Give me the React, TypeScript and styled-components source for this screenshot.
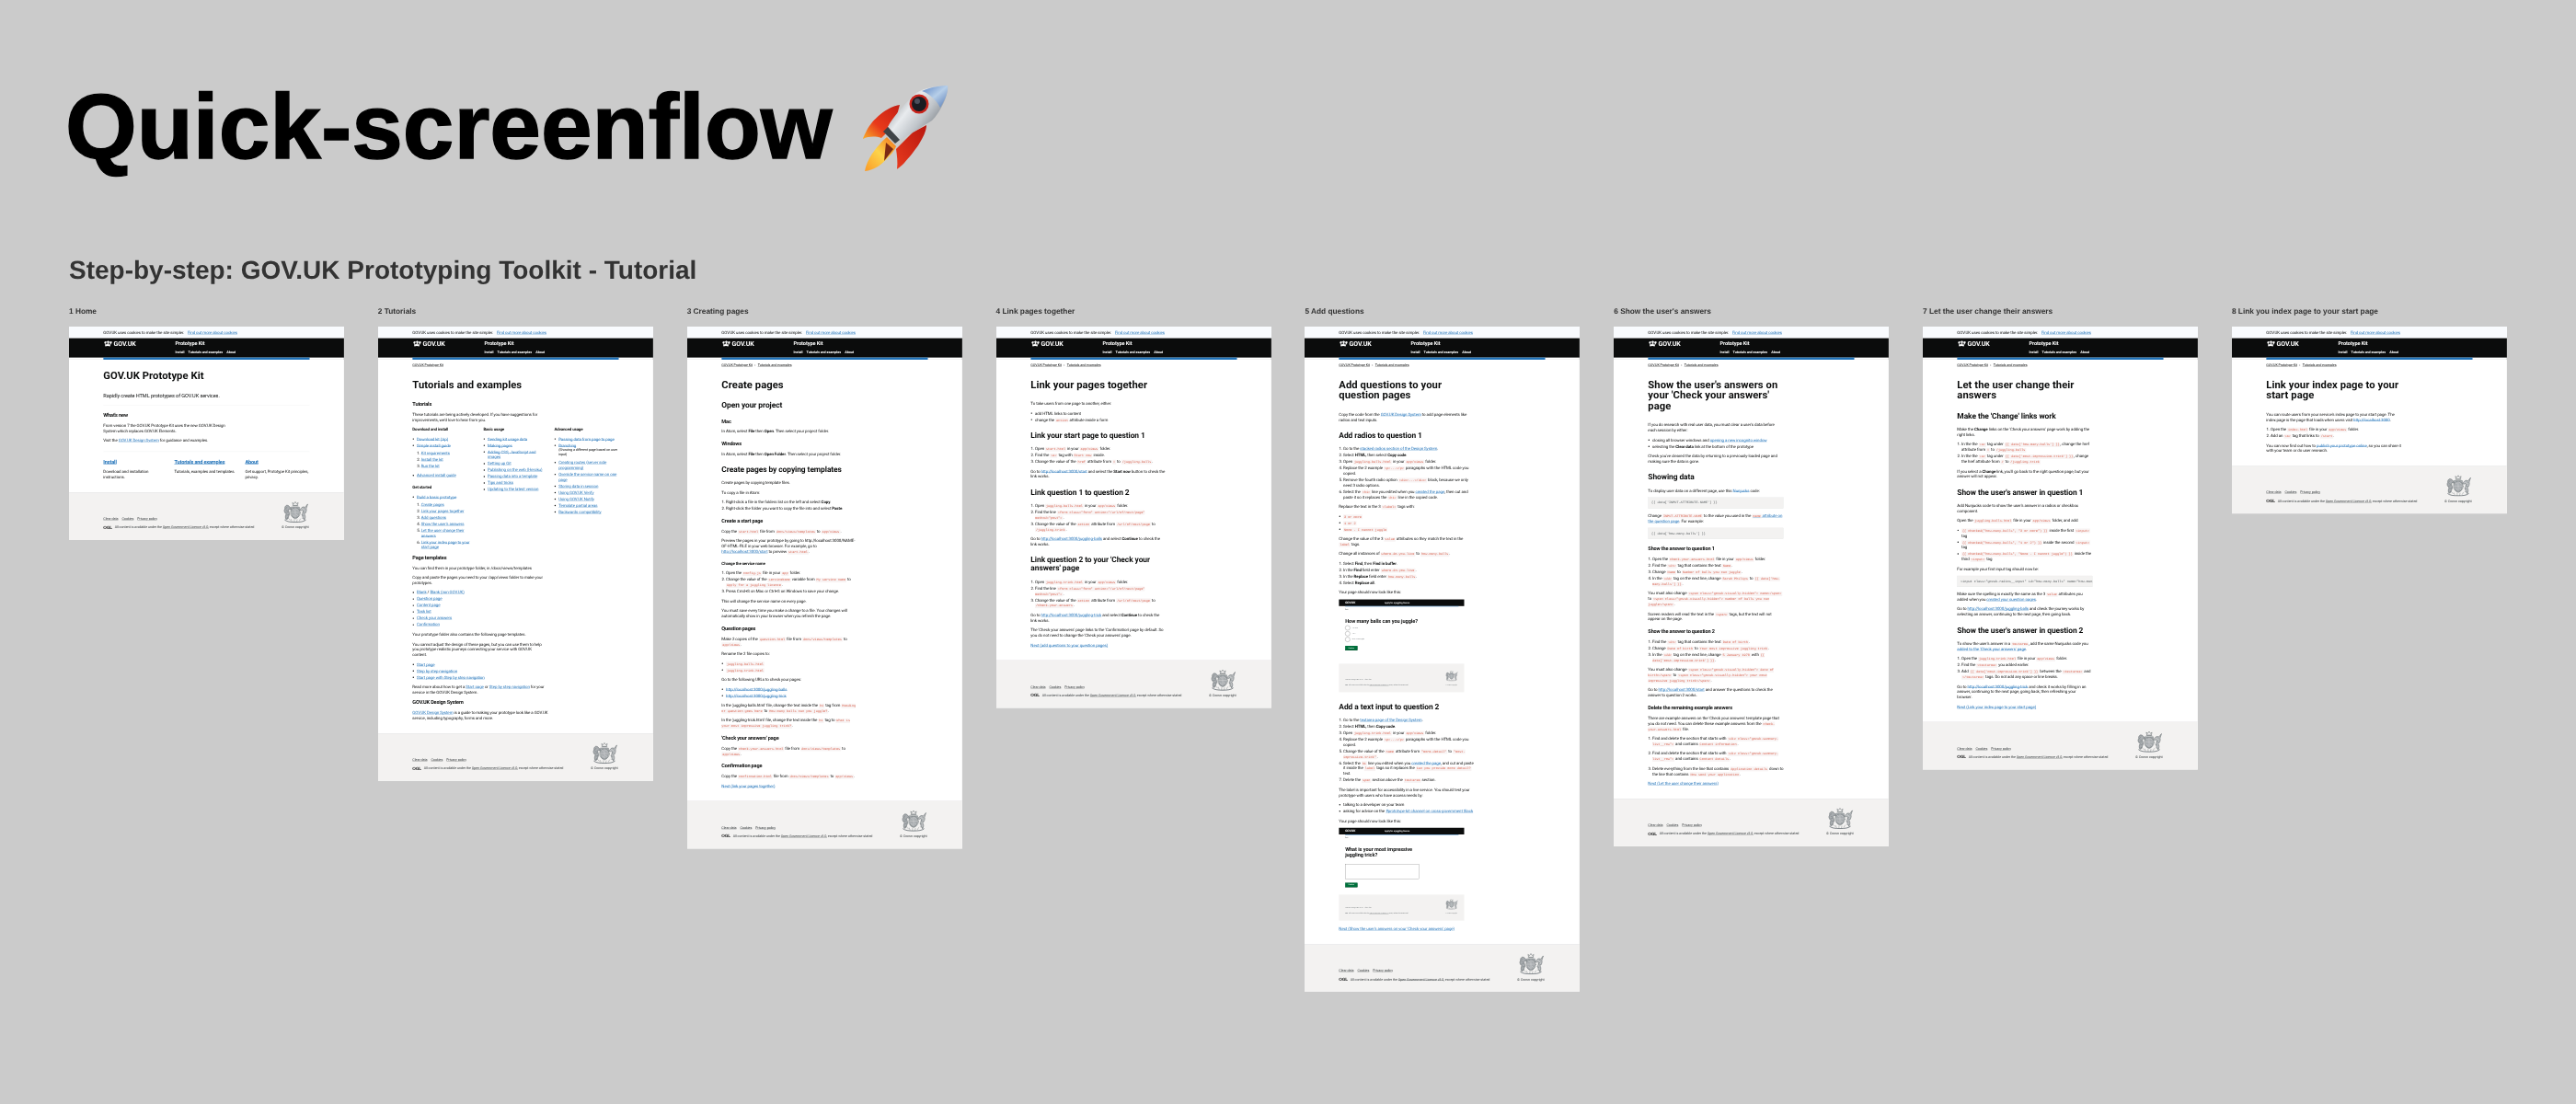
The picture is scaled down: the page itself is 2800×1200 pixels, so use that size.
import React from 'react';
import styled, { createGlobalStyle } from 'styled-components';

const GlobalStyle = createGlobalStyle`
  html, body { margin: 0; padding: 0; background: #cbcbcb; }
  body { width: 2800px; height: 1200px; overflow: hidden; }
`;

const Shell = styled.div`
  padding: 88px 0 0 75px;
  font-family: "Liberation Sans", Arial, sans-serif;
  text-rendering: geometricPrecision;
`;
const TitleRow = styled.div`display: flex; align-items: flex-start; margin-left: -4px;`;
const Title = styled.h1`
  margin: 0; font-size: 100px; line-height: 100px; font-weight: 700; color: #000; filter: blur(0.4px);
  -webkit-text-stroke: 1.4px #000;
`;
const RocketSvg = styled.svg`width: 100px; height: 100px; margin: 2px 0 0 29px; flex: none; filter: blur(0.3px);`;
const Subtitle = styled.h2`
  margin: 90px 0 25px; font-size: 28px; line-height: 28px; font-weight: 700; color: #333; filter: blur(0.4px);
`;
const Flow = styled.div`display: flex; gap: 36.98px; align-items: flex-start;`;
const Column = styled.div`width: 298.88px; flex: none;`;
const Label = styled.div`
  font-size: 8.3px; line-height: 10px; font-weight: 700; color: #333; margin-bottom: 12px; filter: blur(0.25px);
`;
const Frame = styled.div<{ $h: number }>`height: ${p => p.$h}px; filter: blur(0.5px);`;
const Page = styled.div`
  transform: scale(0.2335);
  transform-origin: 0 0;
  width: 1280px;
  background: #fff;
  font-family: Roboto, "Liberation Sans", sans-serif;
  text-rendering: geometricPrecision;
  font-size: 19px;
  line-height: 25px;
  letter-spacing: -0.018em;
  color: #0b0c0c;
`;
const Cookie = styled.div`height: 54px; background: #f9fbfe; display: flex; align-items: center; padding-left: 160px; font-size: 19px; white-space: pre;`;
const CookieLink = styled.a`color: #1d70b8; text-decoration: underline; margin-left: 16px;`;
const Header = styled.header`background: #0b0c0c; color: #fff; height: 90px; border-bottom: 10px solid #fff;`;
const HeaderInner = styled.div`
  width: 960px; height: 100px; margin: 0 auto; border-bottom: 10px solid #1d70b8; box-sizing: border-box; display: grid; grid-template-columns: 335px 1fr;
`;
const Logo = styled.div`display: flex; align-items: center; gap: 8px; font-size: 30px; line-height: 30px; font-weight: 700; height: 30px; margin-top: 11px; letter-spacing: -0.01em;`;
const CrownSvg = styled.svg`width: 40px; height: 32px; fill: #fff;`;
const ServiceBlock = styled.div`padding-top: 13px;`;
const ServiceName = styled.div`font-size: 24px; line-height: 25px; font-weight: 700; letter-spacing: -0.015em;`;
const Nav = styled.div`display: flex; gap: 18px; font-size: 16px; line-height: 25px; font-weight: 700; margin-top: 15px; letter-spacing: -0.02em;`;
const Container = styled.div`width: 960px; margin: 0 auto;`;
const Main = styled.main<{ $top?: number; $bottom?: number }>`
  padding-top: ${p => p.$top ?? 46}px; padding-bottom: ${p => p.$bottom ?? 38}px;
`;
const Crumbs = styled.div`display: flex; gap: 10px; padding-top: 15px; font-size: 16px; line-height: 20px; margin-bottom: 10px;`;
const CrumbLink = styled.a`color: #0b0c0c; text-decoration: underline;`;
const Narrow = styled.div`width: 630px;`;
const H1 = styled.h1`margin: 0 0 50px; font-size: 48px; line-height: 50px; font-weight: 700; letter-spacing: 0.006em;`;
const H2 = styled.h2`margin: 0 0 30px; padding-top: 20px; font-size: 36px; line-height: 40px; font-weight: 700; letter-spacing: -0.008em;`;
const FirstH2 = styled(H2)`padding-top: 0;`;
const H3 = styled.h3`margin: 0 0 20px; padding-top: 10px; font-size: 24px; line-height: 30px; font-weight: 700; letter-spacing: -0.03em;`;
const PlainH3 = styled(H3)`padding-top: 0;`;
const H4 = styled.h4`margin: 0 0 20px; padding-top: 10px; font-size: 19px; line-height: 25px; font-weight: 700; letter-spacing: -0.03em;`;
const ColHead = styled(H4)`padding-top: 0;`;
const Lead = styled.p`margin: 0 0 30px; font-size: 24px; line-height: 30px;`;
const P = styled.p`margin: 0 0 20px;`;
const Small = styled.div`font-size: 16px; line-height: 20px; margin-bottom: 15px; color: #0b0c0c;`;
const A = styled.a`color: #1d70b8; text-decoration: underline;`;
const CardLink = styled.a`display: block; color: #1d70b8; text-decoration: underline; font-size: 24px; line-height: 30px; font-weight: 700; margin-bottom: 20px; letter-spacing: -0.03em;`;
const Code = styled.code`
  font-family: "Liberation Mono", monospace; font-size: 15px; line-height: 1; color: #d9604c; background: #f8f3f3; padding: 2px 4px; letter-spacing: 0;
`;
const Pre = styled.pre`
  margin: 0 0 20px; background: #f3f2f1; border: 1px solid #e2e3e4; padding: 15px; font-family: "Liberation Mono", monospace;
  font-size: 15px; line-height: 20px; overflow: hidden; color: #4d5356; letter-spacing: 0;
`;
const Ol = styled.ol<{ $mb?: number }>`margin: 0 0 ${p => p.$mb ?? 20}px; padding: 0 0 0 20px;`;
const Ul = styled.ul<{ $mb?: number }>`margin: 0 0 ${p => p.$mb ?? 20}px; padding: 0 0 0 20px; list-style: disc;`;
const SubOl = styled(Ol)`margin: 10px 0 20px; padding-left: 20px;`;
const Li = styled.li`margin-bottom: 5px;`;
const SpacedLi = styled(Li)`margin-bottom: 20px;`;
const Hr = styled.hr`border: 0; border-top: 1px solid #e3e5e6; margin: 0 0 31px;`;
const WideHr = styled(Hr)`border-top: 2px solid #eeeff0; margin: 39px 0 30px;`;
const Three = styled.div`display: grid; grid-template-columns: 300px 300px 300px; gap: 30px;`;
const Footer = styled.footer`background: #f3f2f1; border-top: 1px solid #d8d9da; height: 222px; box-sizing: border-box; padding-top: 40px;`;
const FooterInner = styled.div`width: 960px; margin: 0 auto; display: flex; justify-content: space-between; align-items: flex-end;`;
const Meta = styled.div`font-size: 16px; line-height: 20px; color: #383d3f;`;
const MetaLinks = styled.div`display: flex; gap: 17px; margin-bottom: 20px;`;
const MetaLink = styled.a`color: #383d3f; text-decoration: underline;`;
const OglRow = styled.div`display: flex; align-items: center; gap: 12px; font-size: 16px; white-space: nowrap; letter-spacing: -0.02em;`;
const Ogl = styled.span`font-size: 20px; font-weight: 900; letter-spacing: -0.04em; color: #0b0c0c; font-family: "Liberation Sans", sans-serif;`;
const CrestBlock = styled.div`display: flex; flex-direction: column; align-items: center; font-size: 16px; line-height: 20px; color: #383d3f; width: 134px;`;
const CrestSvg = styled.svg<{ $w: number }>`width: ${p => p.$w}px; height: auto; margin-bottom: 11px; display: block;`;

const Mini = styled.div`width: 583px; margin-bottom: 26px;`;
const MiniHeader = styled.div`height: 31px; background: #0b0c0c; color: #fff; display: flex; align-items: center; padding-left: 29px; font-weight: 700; letter-spacing: 0;`;
const MiniLogo = styled.span`font-size: 14px; width: 184px; letter-spacing: -0.02em;`;
const MiniService = styled.span`font-size: 9.5px;`;
const MiniBar = styled.div`margin: 0 26px 0 29px; height: 3px; background: #1d70b8;`;
const MiniBody = styled.div<{ $h: number }>`height: ${p => p.$h}px; padding: 7px 29px 0; box-sizing: border-box; background: #fff;`;
const MiniBack = styled.div`font-size: 7px; line-height: 10px; margin-bottom: 34px; color: #383d3f;`;
const MiniHeading = styled.div`font-size: 24px; line-height: 28px; font-weight: 700; width: 400px; letter-spacing: -0.01em; margin-bottom: 6px;`;
const MiniRadio = styled.div`display: flex; align-items: center; gap: 10px; height: 27px; font-size: 6.5px; color: #5a6064;`;
const RadioDot = styled.span`width: 21px; height: 21px; border: 1px solid #333; border-radius: 50%; flex: none; background: #fff;`;
const MiniButton = styled.div`width: 57px; height: 20px; background: #00703c; color: #fff; font-size: 7.5px; line-height: 20px; text-align: center; margin-top: 16px; box-shadow: 0 1px 0 #002d18;`;
const MiniInput = styled.div`width: 344px; height: 70px; border: 1.5px solid #555; box-sizing: border-box; margin: 28px 0 17px;`;
const MiniFooter = styled.div<{ $h: number }>`height: ${p => p.$h}px; background: #f3f2f1; padding: 0 29px; box-sizing: border-box; display: flex; justify-content: space-between; align-items: flex-end; font-size: 6.5px; line-height: 10px; color: #5a6064; letter-spacing: 0;`;
const MiniMeta = styled.div`padding-bottom: 30px;`;
const MiniMetaTop = styled.div`margin-bottom: 14px; word-spacing: 1px;`;
const MiniCrest = styled.div`display: flex; flex-direction: column; align-items: center; padding: 0 0 30px;`;

const Crown = () => (
  <CrownSvg viewBox="0 0 40 32">
    <path d="M3 12l4 2-1 3 3 1 1-4 3 1-1-5 3 1 1-3-3 0 1-3-3 1-1-3-1 3-3-1 1 3-3 0 1 3 2-1zM20 3l-3 1 1 3-3 0 1 3 3-1-1 6 4 2 4-2-1-6 3 1 1-3-3 0 1-3-3-1-1-2zM33 4l-1 3-3-1 1 3-3 0 1 3 3-1-1 5 3-1 1 4 3-1-1-3 4-2-1-3 2 1 1-3-3 0 1-3-3 1zM7 20c4-2 8-3 13-3s9 1 13 3l-2 8c-3-1-7-2-11-2s-8 1-11 2z" />
  </CrownSvg>
);

const Crest = ({ w = 123 }: { w?: number }) => (
  <CrestSvg $w={w} viewBox="0 0 130 108">
    <g fill="none" stroke="#626a6e" strokeWidth="1.6" strokeLinecap="round" strokeLinejoin="round">
      <path d="M54 20l-3-12 7 6 7-10 7 10 7-6-3 12zM52 24h26" strokeWidth="2.5" />
      <path d="M20 92C14 84 16 72 20 64 10 56 8 46 14 38c-2-8 2-14 9-17 8 0 13 4 14 10 6 1 9 5 7 10-4 1-7 0-9-2-3 4-4 8-2 12 4 8 3 18-1 25l-7 14" strokeWidth="2.5" fill="#a9adb0" />
      <path d="M24 30l-6 8M20 44l8 4M18 56l10-2M24 70l10-4M32 82l-10 4" />
      <path d="M110 92c6-8 5-20 0-28 8-6 12-18 9-27l7-22-13 16c-8-4-16-2-19 5-5 2-8 6-5 10 5 1 8 0 11-3 3 4 4 9 2 13-4 8-3 18 1 25l7 13" strokeWidth="2.5" fill="#c0c3c5" />
      <path d="M106 34l8 6M110 48l-8 4M114 58l-10-2M106 72l-10-4M98 84l10 3" />
      <path d="M45 30h40v30c0 16-9 24-20 28-11-4-20-12-20-28z" fill="#a9adb0" strokeWidth="2" />
      <path d="M65 30v58M45 56h40M50 38l10 8M70 38l10 8M50 66l10 8M70 66l10 8" stroke="#e4e5e6" />
      <circle cx="65" cy="58" r="25" strokeWidth="1.6" />
      <path d="M14 94c10 8 26 10 51 10s41-2 51-10" strokeWidth="3.5" />
      <path d="M30 84l10 10M44 90l4 10M60 92v10M74 92l-2 10M90 88l-6 10" />
    </g>
  </CrestSvg>
);

const Rocket = () => (
  <RocketSvg viewBox="0 0 100 100">
    <defs>
      <linearGradient id="rkBody" x1="0.1" y1="0.15" x2="0.95" y2="0.75">
        <stop offset="0" stopColor="#8a8f94" />
        <stop offset="0.35" stopColor="#e8ebee" />
        <stop offset="0.62" stopColor="#c0c5ca" />
        <stop offset="1" stopColor="#6c7278" />
      </linearGradient>
      <linearGradient id="rkNose" x1="0" y1="0" x2="1" y2="1">
        <stop offset="0" stopColor="#5a83c4" />
        <stop offset="0.5" stopColor="#b7cfe9" />
        <stop offset="1" stopColor="#5277b3" />
      </linearGradient>
      <linearGradient id="rkFin" x1="0" y1="1" x2="1" y2="0">
        <stop offset="0" stopColor="#f9b02a" />
        <stop offset="0.4" stopColor="#e8391a" />
        <stop offset="1" stopColor="#c31f14" />
      </linearGradient>
      <linearGradient id="rkFin2" x1="0" y1="1" x2="1" y2="0">
        <stop offset="0" stopColor="#e83a1e" />
        <stop offset="1" stopColor="#b8170f" />
      </linearGradient>
      <linearGradient id="rkFlame" x1="1" y1="0" x2="0" y2="1">
        <stop offset="0" stopColor="#f36f18" />
        <stop offset="0.5" stopColor="#fcd44c" />
        <stop offset="1" stopColor="#fb9a26" />
      </linearGradient>
    </defs>
    <path d="M44 24C30 26 14 40 8 52c-2 4-4 8-4 9 6-3 14-3 20-1l14-14z" fill="url(#rkFin)" />
    <path d="M73 46c0 12-14 30-24 41-4 4-7 6-8 7 1-8 0-15-1-22l18-18z" fill="url(#rkFin2)" />
    <path d="M30 59l10 10c-2 6-10 14-17 20-5 4-13 7-17 7 1-6 4-13 8-19 5-7 11-14 16-18z" fill="url(#rkFlame)" />
    <path d="M29 65L37 72 27 85z" fill="#7b2a14" />
    <path d="M96 3C85 3 65 6 57 15 48 25 36 38 31 48L44 62C54 57 69 47 79 41 88 32 97 14 96 3Z" fill="url(#rkBody)" />
    <path d="M96 3C88 3 76 5 68 9 75 11 84 19 88 27 93 19 97 10 96 3Z" fill="url(#rkNose)" />
    <path d="M31 48L44 62 39 66 26 53Z" fill="#3f4347" />
    <circle cx="65" cy="23" r="10.5" fill="#c9241c" />
    <circle cx="65" cy="23" r="8" fill="#1a1c22" />
    <circle cx="63" cy="20" r="3" fill="#4a4f5c" />
  </RocketSvg>
);

const SiteFooter = () => (
  <Footer>
    <FooterInner>
      <Meta>
        <MetaLinks>
          <MetaLink>Clear data</MetaLink>
          <MetaLink>Cookies</MetaLink>
          <MetaLink>Privacy policy</MetaLink>
        </MetaLinks>
        <OglRow>
          <Ogl>OGL</Ogl>
          <span>All content is available under the <MetaLink>Open Government Licence v3.0</MetaLink>, except where otherwise stated</span>
        </OglRow>
      </Meta>
      <CrestBlock>
        <Crest />
        <span>© Crown copyright</span>
      </CrestBlock>
    </FooterInner>
  </Footer>
);

const Site = ({ crumbs, top, bottom, children }: { crumbs: number; top?: number; bottom?: number; children: React.ReactNode }) => (
  <Page>
    <Cookie>GOV.UK uses cookies to make the site simpler.<CookieLink>Find out more about cookies</CookieLink></Cookie>
    <Header>
      <HeaderInner>
        <Logo><Crown />GOV.UK</Logo>
        <ServiceBlock>
          <ServiceName>Prototype Kit</ServiceName>
          <Nav><span>Install</span><span>Tutorials and examples</span><span>About</span></Nav>
        </ServiceBlock>
      </HeaderInner>
    </Header>
    <Container>
      {crumbs > 0 && (
        <Crumbs>
          <CrumbLink>GOV.UK Prototype Kit</CrumbLink>
          {crumbs > 1 && <span>›</span>}
          {crumbs > 1 && <CrumbLink>Tutorials and examples</CrumbLink>}
        </Crumbs>
      )}
      <Main $top={top} $bottom={bottom}>{children}</Main>
    </Container>
    <SiteFooter />
  </Page>
);

const Step = ({ n, h, children }: { n: string; h: number; children: React.ReactNode }) => (
  <Column>
    <Label>{n}</Label>
    <Frame $h={h}>{children}</Frame>
  </Column>
);

const OglMini = () => (
  <div><b>OGL</b> &nbsp; All content is available under the <u>Open Government Licence v3.0</u>, except where otherwise stated</div>
);

const MiniRadios = () => (
  <Mini>
    <MiniHeader><MiniLogo>GOV.UK</MiniLogo><MiniService>Apply for a juggling licence</MiniService></MiniHeader>
    <MiniBar />
    <MiniBody $h={265}>
      <MiniBack>Back</MiniBack>
      <MiniHeading>How many balls can you juggle?</MiniHeading>
      <MiniRadio><RadioDot />3 or more</MiniRadio>
      <MiniRadio><RadioDot />1 or 2</MiniRadio>
      <MiniRadio><RadioDot />None - I cannot juggle</MiniRadio>
      <MiniButton>Continue</MiniButton>
    </MiniBody>
    <MiniFooter $h={133}>
      <MiniMeta>
        <MiniMetaTop>GOV.UK Prototype Kit v9.0.0 &nbsp; Clear data</MiniMetaTop>
        <OglMini />
      </MiniMeta>
      <MiniCrest><Crest w={60} /><span>© Crown copyright</span></MiniCrest>
    </MiniFooter>
  </Mini>
);

const MiniText = () => (
  <Mini>
    <MiniHeader><MiniLogo>GOV.UK</MiniLogo><MiniService>Apply for a juggling licence</MiniService></MiniHeader>
    <MiniBar />
    <MiniBody $h={277}>
      <MiniBack>Back</MiniBack>
      <MiniHeading>What is your most impressive juggling trick?</MiniHeading>
      <MiniInput />
      <MiniButton>Continue</MiniButton>
    </MiniBody>
    <MiniFooter $h={121}>
      <MiniMeta>
        <MiniMetaTop>GOV.UK Prototype Kit v9.0.0 &nbsp; Clear data</MiniMetaTop>
        <OglMini />
      </MiniMeta>
      <MiniCrest><Crest w={60} /><span>© Crown copyright</span></MiniCrest>
    </MiniFooter>
  </Mini>
);

const Home = () => (
  <Site crumbs={0} top={51}>
    <H1>GOV.UK Prototype Kit</H1>
    <Lead>Rapidly create HTML prototypes of GOV.UK services.</Lead>
    <Hr />
    <PlainH3>What's new</PlainH3>
    <Narrow>
      <P>From version 7 the GOV.UK Prototype Kit uses the new GOV.UK Design<br />System which replaces GOV.UK Elements.</P>
      <P>Visit the <A>GOV.UK Design System</A> for guidance and examples.</P>
    </Narrow>
    <WideHr />
    <Three>
      <div><CardLink>Install</CardLink><P>Download and installation instructions.</P></div>
      <div><CardLink>Tutorials and examples</CardLink><P>Tutorials, examples and templates.</P></div>
      <div><CardLink>About</CardLink><P>Get support, Prototype Kit principles, privacy.</P></div>
    </Three>
  </Site>
);

const Tutorials = () => (
  <Site crumbs={1}>
    <H1>Tutorials and examples</H1>
    <PlainH3>Tutorials</PlainH3>
    <Narrow><P>These tutorials are being actively developed. If you have suggestions for improvements, we'd love to hear from you.</P></Narrow>
    <Three>
      <div>
        <ColHead>Download and install</ColHead>
        <Ul>
          <Li><A>Download kit (zip)</A></Li>
          <Li><A>Simple install guide</A>
            <SubOl>
              <Li><A>Kit requirements</A></Li>
              <Li><A>Install the kit</A></Li>
              <Li><A>Run the kit</A></Li>
            </SubOl>
          </Li>
          <Li><A>Advanced install guide</A></Li>
        </Ul>
        <H4>Get started</H4>
        <Ul>
          <Li><A>Build a basic prototype</A>
            <SubOl>
              <Li><A>Create pages</A></Li>
              <Li><A>Link your pages together</A></Li>
              <Li><A>Add questions</A></Li>
              <Li><A>Show the user's answers</A></Li>
              <Li><A>Let the user change their answers</A></Li>
              <Li><A>Link your index page to your start page</A></Li>
            </SubOl>
          </Li>
        </Ul>
      </div>
      <div>
        <ColHead>Basic usage</ColHead>
        <Ul>
          <Li><A>Sending kit usage data</A></Li>
          <Li><A>Making pages</A></Li>
          <Li><A>Adding CSS, JavaScript and<br />images</A></Li>
          <Li><A>Setting up Git</A></Li>
          <Li><A>Publishing on the web (Heroku)</A></Li>
          <Li><A>Passing data into a template</A></Li>
          <Li><A>Tips and tricks</A></Li>
          <Li><A>Updating to the latest version</A></Li>
        </Ul>
      </div>
      <div>
        <ColHead>Advanced usage</ColHead>
        <Ul>
          <Li><A>Passing data from page to page</A></Li>
          <Li><A>Branching</A><Small>(Showing a different page based on user input)</Small></Li>
          <Li><A>Creating routes (server side<br />programming)</A></Li>
          <Li><A>Override the service name on one<br />page</A></Li>
          <Li><A>Storing data in session</A></Li>
          <Li><A>Using GOV.UK Verify</A></Li>
          <Li><A>Using GOV.UK Notify</A></Li>
          <Li><A>Template partial areas</A></Li>
          <Li><A>Backwards compatibility</A></Li>
        </Ul>
      </div>
    </Three>
    <Narrow>
      <PlainH3>Page templates</PlainH3>
      <P>You can find them in your prototype folder, in /docs/views/templates</P>
      <P>Copy and paste the pages you need to your /app/views folder to make your prototypes.</P>
      <Ul>
        <Li><A>Blank</A> / <A>Blank (non GOV.UK)</A></Li>
        <Li><A>Question page</A></Li>
        <Li><A>Content page</A></Li>
        <Li><A>Task list</A></Li>
        <Li><A>Check your answers</A></Li>
        <Li><A>Confirmation</A></Li>
      </Ul>
      <P>Your prototype folder also contains the following page templates.</P>
      <P>You cannot adjust the design of these pages, but you can use them to help<br />you prototype realistic journeys connecting your service with GOV.UK<br />content.</P>
      <Ul>
        <Li><A>Start page</A></Li>
        <Li><A>Step by step navigation</A></Li>
        <Li><A>Start page with Step by step navigation</A></Li>
      </Ul>
      <P>Read more about how to get a <A>Start page</A> or <A>Step by step navigation</A> for your service in the GOV.UK Design System.</P>
      <PlainH3>GOV.UK Design System</PlainH3>
      <P><A>GOV.UK Design System</A> is a guide to making your prototype look like a GOV.UK service, including typography, forms and more.</P>
    </Narrow>
  </Site>
);

const Creating = () => (
  <Site crumbs={2}>
    <Narrow>
      <H1>Create pages</H1>
      <FirstH2>Open your project</FirstH2>
      <H3>Mac</H3>
      <P>In Atom, select <b>File</b> then <b>Open</b>. Then select your project folder.</P>
      <H3>Windows</H3>
      <P>In Atom, select <b>File</b> then <b>Open Folder</b>. Then select your project folder.</P>
      <H2>Create pages by copying templates</H2>
      <P>Create pages by copying template files.</P>
      <P>To copy a file in Atom:</P>
      <Ol>
        <Li>Right-click a file in the folders list on the left and select <b>Copy</b>.</Li>
        <Li>Right-click the folder you want to copy the file into and select <b>Paste</b>.</Li>
      </Ol>
      <H3>Create a start page</H3>
      <P>Copy the <Code>start.html</Code> file from <Code>docs/views/templates</Code> to <Code>app/views</Code>.</P>
      <P>Preview the pages in your prototype by going to http://localhost:3000/NAME-OF-HTML-FILE in your web browser. For example, go to <A>http://localhost:3000/start</A> to preview <Code>start.html</Code>.</P>
      <H4>Change the service name</H4>
      <Ol>
        <Li>Open the <Code>config.js</Code> file in your <Code>app</Code> folder.</Li>
        <Li>Change the value of the <Code>serviceName</Code> variable from <Code>My service name</Code> to <Code>Apply for a juggling licence</Code>.</Li>
        <Li>Press Cmd+S on Mac or Ctrl+S on Windows to save your change.</Li>
      </Ol>
      <P>This will change the service name on every page.</P>
      <P>You must save every time you make a change to a file. Your changes will automatically show in your browser when you refresh the page.</P>
      <H3>Question pages</H3>
      <P>Make 2 copies of the <Code>question.html</Code> file from <Code>docs/views/templates</Code> to <Code>app/views</Code>.</P>
      <P>Rename the 2 file copies to:</P>
      <Ul>
        <Li><Code>juggling-balls.html</Code></Li>
        <Li><Code>juggling-trick.html</Code></Li>
      </Ul>
      <P>Go to the following URLs to check your pages:</P>
      <Ul>
        <Li><A>http://localhost:3000/juggling-balls</A></Li>
        <Li><A>http://localhost:3000/juggling-trick</A></Li>
      </Ul>
      <P>In the 'juggling-balls.html' file, change the text inside the <Code>h1</Code> tag from <Code>Heading or question goes here</Code> to <Code>How many balls can you juggle?</Code>.</P>
      <P>In the 'juggling-trick.html' file, change the text inside the <Code>h1</Code> tag to <Code>What is your most impressive juggling trick?</Code>.</P>
      <H3>'Check your answers' page</H3>
      <P>Copy the <Code>check-your-answers.html</Code> file from <Code>docs/views/templates</Code> to <Code>app/views</Code>.</P>
      <H3>Confirmation page</H3>
      <P>Copy the <Code>confirmation.html</Code> file from <Code>docs/views/templates</Code> to <Code>app/views</Code>.</P>
      <P><A>Next (link your pages together)</A></P>
    </Narrow>
  </Site>
);

const Linking = () => (
  <Site crumbs={2}>
    <Narrow>
      <H1>Link your pages together</H1>
      <P>To take users from one page to another, either:</P>
      <Ul>
        <Li>add HTML links to content</Li>
        <Li>change the <Code>action</Code> attribute inside a form</Li>
      </Ul>
      <H2>Link your start page to question 1</H2>
      <Ol>
        <Li>Open <Code>start.html</Code> in your <Code>app/views</Code> folder.</Li>
        <Li>Find the <Code>&lt;a&gt;</Code> tag with <Code>Start now</Code> inside.</Li>
        <Li>Change the value of the <Code>href</Code> attribute from <Code>#</Code> to <Code>/juggling-balls</Code>.</Li>
      </Ol>
      <P>Go to <A>http://localhost:3000/start</A> and select the <b>Start now</b> button to check the link works.</P>
      <H2>Link question 1 to question 2</H2>
      <Ol>
        <Li>Open <Code>juggling-balls.html</Code> in your <Code>app/views</Code> folder.</Li>
        <Li>Find the line <Code>&lt;form class="form" action="/url/of/next/page" method="post"&gt;</Code>.</Li>
        <Li>Change the value of the <Code>action</Code> attribute from <Code>/url/of/next/page</Code> to <Code>/juggling-trick</Code>.</Li>
      </Ol>
      <P>Go to <A>http://localhost:3000/juggling-balls</A> and select <b>Continue</b> to check the link works.</P>
      <H2>Link question 2 to your 'Check your answers' page</H2>
      <Ol>
        <Li>Open <Code>juggling-trick.html</Code> in your <Code>app/views</Code> folder.</Li>
        <Li>Find the line <Code>&lt;form class="form" action="/url/of/next/page" method="post"&gt;</Code>.</Li>
        <Li>Change the value of the <Code>action</Code> attribute from <Code>/url/of/next/page</Code> to <Code>/check-your-answers</Code>.</Li>
      </Ol>
      <P>Go to <A>http://localhost:3000/juggling-trick</A> and select <b>Continue</b> to check the link works.</P>
      <P>The 'Check your answers' page links to the 'Confirmation' page by default. So you do not need to change the 'Check your answers' page.</P>
      <P><A>Next (add questions to your question pages)</A></P>
    </Narrow>
  </Site>
);

const Questions = () => (
  <Site crumbs={2}>
    <Narrow>
      <H1>Add questions to your question pages</H1>
      <P>Copy the code from the <A>GOV.UK Design System</A> to add page elements like radios and text inputs.</P>
      <H2>Add radios to question 1</H2>
      <Ol>
        <Li>Go to the <A>stacked radios section of the Design System</A>.</Li>
        <Li>Select <b>HTML</b>, then select <b>Copy code</b>.</Li>
        <Li>Open <Code>juggling-balls.html</Code> in your <Code>app/views</Code> folder.</Li>
        <Li>Replace the 2 example <Code>&lt;p&gt;...&lt;/p&gt;</Code> paragraphs with the HTML code you copied.</Li>
        <Li>Remove the fourth radio option <Code>&lt;div&gt;...&lt;/div&gt;</Code> block, because we only need 3 radio options.</Li>
        <Li>Select the <Code>&lt;h1&gt;</Code> line you edited when you <A>created the page</A>, then cut and paste it so it replaces the <Code>&lt;h1&gt;</Code> line in the copied code.</Li>
      </Ol>
      <P>Replace the text in the 3 <Code>&lt;label&gt;</Code> tags with:</P>
      <Ul>
        <Li><Code>3 or more</Code></Li>
        <Li><Code>1 or 2</Code></Li>
        <Li><Code>None - I cannot juggle</Code></Li>
      </Ul>
      <P>Change the value of the 3 <Code>value</Code> attributes so they match the text in the <Code>label</Code> tags.</P>
      <P>Change all instances of <Code>where-do-you-live</Code> to <Code>how-many-balls</Code>.</P>
      <Ol>
        <Li>Select <b>Find</b>, then <b>Find in buffer</b>.</Li>
        <Li>In the <b>Find</b> field enter <Code>where-do-you-live</Code>.</Li>
        <Li>In the <b>Replace</b> field enter <Code>how-many-balls</Code>.</Li>
        <Li>Select <b>Replace all</b>.</Li>
      </Ol>
      <P>Your page should now look like this:</P>
      <MiniRadios />
      <H2>Add a text input to question 2</H2>
      <Ol>
        <Li>Go to the <A>textarea page of the Design System</A>.</Li>
        <Li>Select <b>HTML</b>, then <b>Copy code</b>.</Li>
        <Li>Open <Code>juggling-trick.html</Code> in your <Code>app/views</Code> folder.</Li>
        <Li>Replace the 2 example <Code>&lt;p&gt;...&lt;/p&gt;</Code> paragraphs with the HTML code you copied.</Li>
        <Li>Change the value of the <Code>name</Code> attribute from <Code>"more-detail"</Code> to <Code>"most-impressive-trick"</Code>.</Li>
        <Li>Select the <Code>h1</Code> line you edited when you <A>created the page</A>, and cut and paste it inside the <Code>label</Code> tags so it replaces the <Code>Can you provide more detail?</Code> text.</Li>
        <Li>Delete the <Code>span</Code> section above the <Code>textarea</Code> section.</Li>
      </Ol>
      <P>The label is important for accessibility in a live service. You should test your prototype with users who have access needs by:</P>
      <Ul>
        <Li>talking to a developer on your team</Li>
        <Li>asking for advice on the <A>#prototype-kit channel on cross-government Slack</A></Li>
      </Ul>
      <P>Your page should now look like this:</P>
      <MiniText />
      <P><A>Next (Show the user's answers on your 'Check your answers' page)</A></P>
    </Narrow>
  </Site>
);

const Answers = () => (
  <Site crumbs={2}>
    <Narrow>
      <H1>Show the user's answers on your 'Check your answers' page</H1>
      <P>If you do research with real user data, you must clear a user's data before each session by either:</P>
      <Ul>
        <Li>closing all browser windows and <A>opening a new incognito window</A></Li>
        <Li>selecting the <b>Clear data</b> link at the bottom of the prototype</Li>
      </Ul>
      <P>Check you've cleared the data by returning to a previously-loaded page and making sure the data is gone.</P>
      <H2>Showing data</H2>
      <P>To display user data on a different page, use this <A>Nunjucks</A> code:</P>
      <Pre>{`{{ data['INPUT-ATTRIBUTE-NAME'] }}`}</Pre>
      <P>Change <Code>INPUT-ATTRIBUTE-NAME</Code> to the value you used in the <A><Code>name</Code> attribute on the question page</A>. For example:</P>
      <Pre>{`{{ data['how-many-balls'] }}`}</Pre>
      <H3>Show the answer to question 1</H3>
      <Ol>
        <Li>Open the <Code>check-your-answers.html</Code> file in your <Code>app/views</Code> folder.</Li>
        <Li>Find the <Code>&lt;dt&gt;</Code> tag that contains the text <Code>Name</Code>.</Li>
        <Li>Change <Code>Name</Code> to <Code>Number of balls you can juggle</Code>.</Li>
        <Li>In the <Code>&lt;dd&gt;</Code> tag on the next line, change <Code>Sarah Philips</Code> to <Code>{`{{ data['how-many-balls'] }}`}</Code>.</Li>
      </Ol>
      <P>You must also change <Code>&lt;span class="govuk-visually-hidden"&gt; name&lt;/span&gt;</Code> to <Code>&lt;span class="govuk-visually-hidden"&gt; number of balls you can juggle&lt;/span&gt;</Code>.</P>
      <P>Screen readers will read the text in the <Code>&lt;span&gt;</Code> tags, but the text will not appear on the page.</P>
      <H3>Show the answer to question 2</H3>
      <Ol>
        <Li>Find the <Code>&lt;dt&gt;</Code> tag that contains the text <Code>Date of birth</Code>.</Li>
        <Li>Change <Code>Date of birth</Code> to <Code>Your most impressive juggling trick</Code>.</Li>
        <Li>In the <Code>&lt;dd&gt;</Code> tag on the next line, change <Code>5 January 1978</Code> with <Code>{`{{ data['most-impressive-trick'] }}`}</Code>.</Li>
      </Ol>
      <P>You must also change <Code>&lt;span class="govuk-visually-hidden"&gt; date of birth&lt;/span&gt;</Code> to <Code>&lt;span class="govuk-visually-hidden"&gt; your most impressive juggling trick&lt;/span&gt;</Code>.</P>
      <P>Go to <A>http://localhost:3000/start</A> and answer the questions to check the answer to question 2 works.</P>
      <H3>Delete the remaining example answers</H3>
      <P>There are example answers on the 'Check your answers' template page that you do not need. You can delete these example answers from the <Code>check-your-answers.html</Code> file.</P>
      <Ol>
        <SpacedLi>Find and delete the section that starts with <Code>&lt;div class="govuk-summary-list__row"&gt;</Code> and contains <Code>Contact information</Code>.</SpacedLi>
        <SpacedLi>Find and delete the section that starts with <Code>&lt;div class="govuk-summary-list__row"&gt;</Code> and contains <Code>Contact details</Code>.</SpacedLi>
        <SpacedLi>Delete everything from the line that contains <Code>Application details</Code> down to the line that contains <Code>Now send your application</Code>.</SpacedLi>
      </Ol>
      <P><A>Next (Let the user change their answers)</A></P>
    </Narrow>
  </Site>
);

const Change = () => (
  <Site crumbs={2}>
    <Narrow>
      <H1>Let the user change their answers</H1>
      <FirstH2>Make the 'Change' links work</FirstH2>
      <P>Make the <b>Change</b> links on the 'Check your answers' page work by adding the right links.</P>
      <Ol>
        <Li>In the the <Code>&lt;a&gt;</Code> tag under <Code>{`{{ data['how-many-balls'] }}`}</Code>, change the href attribute from <Code>#</Code> to <Code>/juggling-balls</Code></Li>
        <Li>In the the <Code>&lt;a&gt;</Code> tag under <Code>{`{{ data['most-impressive-trick'] }}`}</Code>, change the href attribute from <Code>#</Code> to <Code>/juggling-trick</Code></Li>
      </Ol>
      <P>If you select a <b>Change</b> link, you'll go back to the right question page, but your answer will not appear.</P>
      <H2>Show the user's answer in question 1</H2>
      <P>Add Nunjucks code to show the user's answer in a radios or checkbox component.</P>
      <P>Open the <Code>juggling-balls.html</Code> file in your <Code>app/views</Code> folder, and add:</P>
      <Ul>
        <Li><Code>{`{{ checked("how-many-balls", "3 or more") }}`}</Code> inside the first <Code>&lt;input&gt;</Code> tag</Li>
        <Li><Code>{`{{ checked("how-many-balls", "1 or 2") }}`}</Code> inside the second <Code>&lt;input&gt;</Code> tag</Li>
        <Li><Code>{`{{ checked("how-many-balls", "None - I cannot juggle") }}`}</Code> inside the third <Code>&lt;input&gt;</Code> tag</Li>
      </Ul>
      <P>For example your first input tag should now be:</P>
      <Pre>{`<input class="govuk-radios__input" id="how-many-balls" name="how-many-balls" type="radio" value="3 or more">`}</Pre>
      <P>Make sure the spelling is exactly the same as the 3 <Code>value</Code> attributes you added when you <A>created your question pages</A>.</P>
      <P>Go to <A>http://localhost:3000/juggling-balls</A> and check the journey works by selecting an answer, continuing to the next page, then going back.</P>
      <H2>Show the user's answer in question 2</H2>
      <P>To show the user's answer in a <Code>textarea</Code>, add the same Nunjucks code you <A>added to the 'Check your answers' page</A>.</P>
      <Ol>
        <Li>Open the <Code>juggling-trick.html</Code> file in your <Code>app/views</Code> folder.</Li>
        <Li>Find the <Code>&lt;textarea&gt;</Code> you added earlier.</Li>
        <Li>Add <Code>{`{{ data['most-impressive-trick'] }}`}</Code> between the <Code>&lt;textarea&gt;</Code> and <Code>&lt;/textarea&gt;</Code> tags. Do not add any space or line breaks.</Li>
      </Ol>
      <P>Go to <A>http://localhost:3000/juggling-trick</A> and check it works by filling in an<br />answer, continuing to the next page, going back, then refreshing your<br />browser.</P>
      <P><A>Next (Link your index page to your start page)</A></P>
    </Narrow>
  </Site>
);

const IndexPage = () => (
  <Site crumbs={2}>
    <Narrow>
      <H1>Link your index page to your start page</H1>
      <P>You can route users from your service's index page to your start page. The index page is the page that loads when users visit <A>http://localhost:3000</A>.</P>
      <Ol>
        <Li>Open the <Code>index.html</Code> file in your <Code>app/views</Code> folder.</Li>
        <Li>Add an <Code>&lt;a&gt;</Code> tag that links to <Code>/start</Code>.</Li>
      </Ol>
      <P>You can now find out how to <A>publish your prototype online</A>, so you can share it with your team or do user research.</P>
    </Narrow>
  </Site>
);

export default function App() {
  return (
    <>
      <GlobalStyle />
      <Shell>
        <TitleRow>
          <Title>Quick-screenflow</Title>
          <Rocket />
        </TitleRow>
        <Subtitle>Step-by-step: GOV.UK Prototyping Toolkit - Tutorial</Subtitle>
        <Flow>
          <Step n="1 Home" h={232}><Home /></Step>
          <Step n="2 Tutorials" h={494}><Tutorials /></Step>
          <Step n="3 Creating pages" h={570}><Creating /></Step>
          <Step n="4 Link pages together" h={414}><Linking /></Step>
          <Step n="5 Add questions" h={722}><Questions /></Step>
          <Step n="6 Show the user's answers" h={564}><Answers /></Step>
          <Step n="7 Let the user change their answers" h={482}><Change /></Step>
          <Step n="8 Link you index page to your start page" h={204}><IndexPage /></Step>
        </Flow>
      </Shell>
    </>
  );
}
